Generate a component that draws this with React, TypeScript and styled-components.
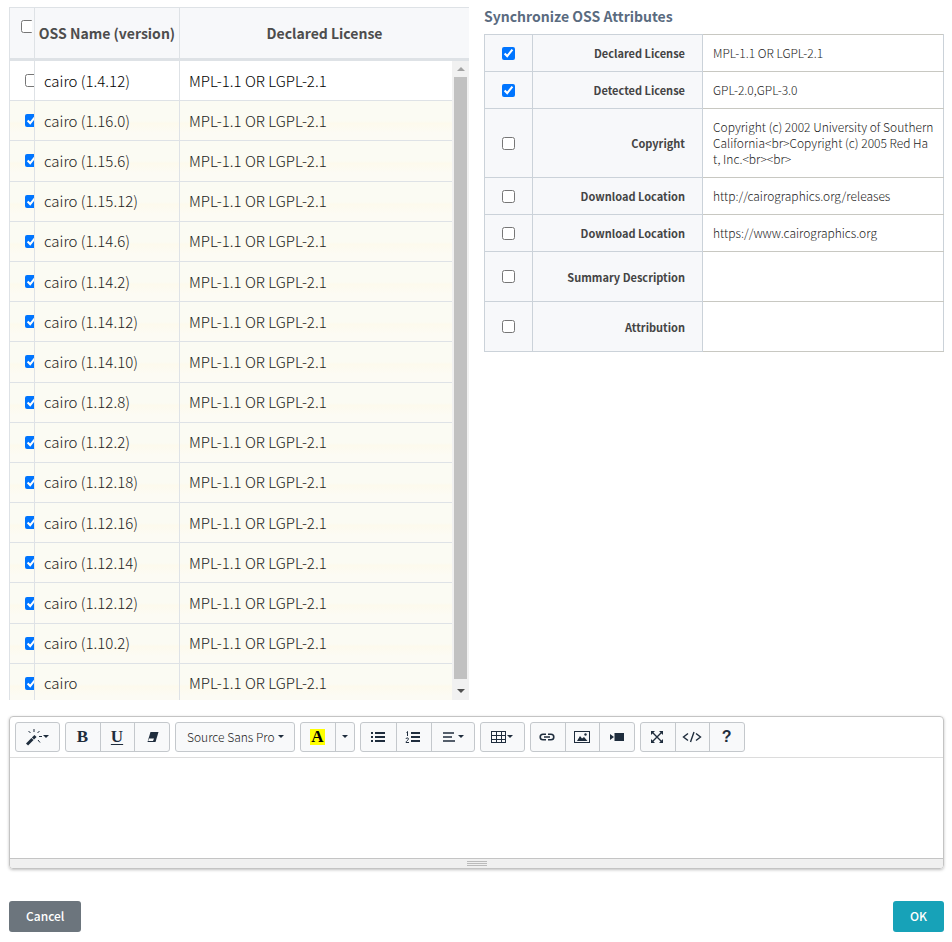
import React from "react";
import styled, { createGlobalStyle } from "styled-components";

const FONT = '"Noto Sans CJK KR", "Noto Sans CJK SC", sans-serif';

const GlobalStyle = createGlobalStyle`
  *, *::before, *::after { box-sizing: border-box; }
  body { margin: 0; background: #fff; color: #222; font-family: ${FONT}; font-size: 14px; line-height: 24px; }
  button, select, textarea, input { font-family: inherit; }
`;

const Page = styled.main`
  padding: 7px 8px 10px 9px;
`;

const Columns = styled.div`
  display: grid;
  grid-template-columns: 1fr 1fr;
  gap: 15px;
  align-items: start;
`;

const GridTable = styled.table`
  width: 100%;
  table-layout: fixed;
  border-collapse: separate;
  border-spacing: 0;
`;

const HeadTable = styled(GridTable)`
  background: #f7f8fa;
  border-top: 1px solid #dee2e6;
  border-bottom: 3px solid #dee2e6;
`;

const HeadCell = styled.th`
  height: 50px;
  padding: 0 0 1px;
  border-left: 1px solid #dee2e6;
  color: #4d4d4d;
  font-size: 14px;
  font-weight: 700;
  text-align: center;
  white-space: nowrap;
`;

const Clip = styled.div<{ $head?: boolean }>`
  display: flex;
  overflow: hidden;
  margin-right: ${(p) => (p.$head ? 2 : 0)}px;
  padding: ${(p) => (p.$head ? "0 0 13px 11px" : "0 0 0 15px")};
`;

const Check = styled.input`
  flex: none;
  width: 13px;
  height: 13px;
  margin: 0;
`;

const Scroller = styled.div`
  display: flex;
  height: 639px;
`;

const Viewport = styled.div`
  flex: 1;
  min-width: 0;
  overflow: hidden;
`;

const BodyTable = styled(GridTable)`
  height: 643px;
  font-size: 15px;
  font-weight: 300;
`;

const BodyRow = styled.tr<{ $on: boolean }>`
  background: ${(p) => (p.$on ? "linear-gradient(#fbfbf3 0 50%, #fdfaed 56%, #fcfbf4 80%, #fcfbf4)" : "#fff")};
  color: ${(p) => (p.$on ? "#222" : "#000")};
`;

const BodyCell = styled.td<{ $flush?: boolean }>`
  padding: ${(p) => (p.$flush ? "0" : "0 9px")};
  border-left: 1px solid #dee2e6;
  border-bottom: 1px solid #dee2e6;
  white-space: nowrap;
  overflow: hidden;
`;

const ScrollTrack = styled.div`
  display: flex;
  flex-direction: column;
  width: 17px;
  background: #f1f1f1;
`;

const ScrollButton = styled.button<{ $dim?: boolean }>`
  display: grid;
  place-items: center;
  height: ${(p) => (p.$dim ? 16 : 21)}px;
  padding: ${(p) => (p.$dim ? 0 : 2)}px 0 0;
  border: 0;
  background: none;
  color: ${(p) => (p.$dim ? "#a3a3a3" : "#505050")};
`;

const ScrollThumb = styled.div`
  flex: 1;
  margin: 0 2px;
  background: #c1c1c1;
`;

const Title = styled.h2`
  margin: 0;
  padding-bottom: 9px;
  color: #5a6b7f;
  font-size: 14px;
  line-height: 18px;
  font-weight: 700;
`;

const AttrTable = styled.table`
  width: 100%;
  table-layout: fixed;
  border-collapse: collapse;
  font-size: 11px;
  line-height: 16px;
`;

const AttrRow = styled.tr<{ $tall?: boolean }>`
  height: ${(p) => (p.$tall ? 50 : 37)}px;
`;

const AttrCheck = styled.td`
  padding: 0;
  border: 1px solid #cbd2d9;
  background: #f7f8fa;
  text-align: center;
  vertical-align: middle;
`;

const CheckCenter = styled.div`
  display: flex;
  justify-content: center;
`;

const AttrName = styled.th`
  padding: 0 17px 0 10px;
  border: 1px solid #cbd2d9;
  background: #f7f8fa;
  color: #444;
  text-align: right;
`;

const AttrValue = styled.td`
  padding: 10px 8px 10px 10px;
  border: 1px solid #c8c8c2;
  border-left-color: #cbd2d9;
  border-right-color: #cbd2d9;
  font-size: 12px;
  font-weight: 300;
  white-space: pre-line;
  overflow-wrap: anywhere;
`;

const Editor = styled.section`
  margin-top: 16px;
  border: 1px solid #c4c4c4;
  border-radius: 4px;
  box-shadow: 0 1px 3px rgba(0, 0, 0, 0.25);
  overflow: hidden;
`;

const Toolbar = styled.div`
  display: flex;
  flex-wrap: wrap;
  gap: 5px;
  padding: 5px;
  border-bottom: 1px solid #dcdcdc;
`;

const Group = styled.div<{ $width: number }>`
  display: flex;
  width: ${(p) => p.$width}px;
  height: 30px;
  border: 1px solid #c4c8cc;
  border-radius: 3px;
  background: #f8f9fa;
  color: #1f2d3d;
  overflow: hidden;
`;

const Tool = styled.button<{ $size?: "narrow" | "wide" }>`
  display: flex;
  align-items: center;
  justify-content: center;
  flex: ${(p) => (p.$size === "narrow" ? "0 0 19px" : p.$size === "wide" ? "0 0 43px" : "1")};
  padding: 0 1px 0 0;
  border: 0;
  background: none;
  color: inherit;

  button + & {
    border-left: 1px solid #c4c8cc;
  }
`;

const Glyph = styled.span<{ $underline?: boolean; $mark?: boolean }>`
  padding: ${(p) => (p.$mark ? "0 1px" : "0")};
  background: ${(p) => (p.$mark ? "#ff0" : "none")};
  color: ${(p) => (p.$mark ? "#000" : "inherit")};
  font-family: "Liberation Serif", serif;
  font-size: 17px;
  line-height: 16px;
  font-weight: 700;
  text-decoration: ${(p) => (p.$underline ? "underline 1px" : "none")};
  text-underline-offset: 2px;
`;

const HelpGlyph = styled.span`
  font-family: "Liberation Sans", sans-serif;
  font-size: 16px;
  line-height: 16px;
  font-weight: 700;
`;

const FontPicker = styled.label`
  display: flex;
  align-items: center;
  position: relative;
  flex: 1;

  svg {
    position: absolute;
    right: 10px;
    pointer-events: none;
  }
`;

const FontSelect = styled.select`
  appearance: none;
  width: 100%;
  height: 28px;
  padding: 0 16px 1px 11px;
  border: 0;
  background: none;
  color: #222;
  font-size: 12px;
  font-weight: 300;
`;

const Writing = styled.textarea`
  display: block;
  width: 100%;
  height: 100px;
  padding: 10px;
  border: 0;
  outline: 0;
  resize: none;
  font-size: 14px;
`;

const StatusBar = styled.div`
  display: grid;
  place-items: center;
  height: 10px;
  border-top: 1px solid #c4c4c4;
  background: #f0f0f0;
`;

const Grip = styled.span`
  width: 20px;
  height: 5px;
  border: solid #bbb;
  border-width: 1px 0;
  background: linear-gradient(transparent 1px, #bbb 1px, #bbb 2px, transparent 2px);
`;

const Footer = styled.footer`
  display: flex;
  justify-content: space-between;
  margin-top: 32px;
`;

const Action = styled.button<{ $primary?: boolean }>`
  height: 31px;
  padding: 0 17px 2px;
  border: 0;
  border-radius: 3px;
  background: ${(p) => (p.$primary ? "#17a2b8" : "#6c757d")};
  color: #fff;
  font-size: 12px;
  font-weight: 500;
`;

const Caret = () => (
  <svg width="6" height="6" viewBox="0 0 6 6" fill="currentColor" aria-hidden="true">
    <path d="M0 1h6L3 4z" />
  </svg>
);

const Icon = ({ children }: { children: React.ReactNode }) => (
  <svg width="16" height="16" viewBox="0 0 16 16" fill="none" stroke="currentColor" aria-hidden="true">
    {children}
  </svg>
);

const MagicIcon = () => (
  <svg width="17" height="18" viewBox="0 0 17 18" fill="none" stroke="currentColor" aria-hidden="true">
    <path d="M1 16.500L6.500 11" strokeWidth="3" />
    <path d="M7 10.500l2.500-2.500" strokeWidth="3" />
    <path d="M8 1v3M2.500 3l2 2M13.500 3l-2 2M13 8.500h3M12 12l2 2.500" strokeWidth="1" />
  </svg>
);
const EraserIcon = () => (
  <Icon>
    <path d="M6.500 3h8l-3 10h-8z" fill="currentColor" stroke="none" />
    <path d="M5 9.500h5l-1 2.500H4.200z" fill="#f8f9fa" stroke="none" />
  </Icon>
);
const ListIcon = () => (
  <Icon>
    <path d="M5 4h10M5 8h10M5 12h10" strokeWidth="2" />
    <path d="M1 4h2M1 8h2M1 12h2" strokeWidth="2" />
  </Icon>
);
const OrderedIcon = () => (
  <Icon>
    <path d="M6 4h9M6 8h9M6 12h9" strokeWidth="2" />
    <path d="M1.500 3.500L2.500 2.500V7M1 10c0-1.500 2.500-1.500 2.500 0C3.500 11 1 12 1 13.500h3" />
  </Icon>
);
const AlignIcon = () => (
  <Icon>
    <path d="M1 4h11M1 8h9M1 12h12" strokeWidth="1.600" />
  </Icon>
);
const GridIcon = () => (
  <Icon>
    <rect x="0.500" y="2.500" width="14" height="11" />
    <path d="M0.500 6.500h14M0.500 10.500h14M5.500 2.500v11M10.500 2.500v11" />
  </Icon>
);
const LinkIcon = () => (
  <Icon>
    <path d="M7 5.200H4a2.800 2.800 0 0 0 0 5.600h3M9 5.200h3a2.800 2.800 0 0 1 0 5.600H9M5 8h6" strokeWidth="1.600" />
  </Icon>
);
const PictureIcon = () => (
  <Icon>
    <rect x="0.500" y="2.500" width="15" height="11" />
    <path d="M3 12l3-5 2 2.500L10 8l3.500 4z" fill="currentColor" stroke="none" />
    <circle cx="11.500" cy="5.500" r="1.200" fill="currentColor" stroke="none" />
  </Icon>
);
const VideoIcon = () => (
  <Icon>
    <path d="M5.500 4H15v8H5.500zM1 5l4 3-4 3z" fill="currentColor" stroke="none" />
  </Icon>
);
const ExpandIcon = () => (
  <Icon>
    <path d="M3.500 3.500l9 9M12.500 3.500l-9 9" strokeWidth="1.400" />
    <path d="M2 2h4L2 6zM14 2v4l-4-4zM2 14v-4l4 4zM14 14h-4l4-4z" fill="currentColor" stroke="none" />
  </Icon>
);
const CodeIcon = () => (
  <svg width="20" height="16" viewBox="0 0 20 16" fill="none" stroke="currentColor" strokeWidth="1.400" aria-hidden="true">
    <path d="M6 4.500L1.500 8 6 11.500M14 4.500L18.500 8 14 11.500M12 3L8.500 13" />
  </svg>
);

const versions = [
  "1.4.12", "1.16.0", "1.15.6", "1.15.12", "1.14.6", "1.14.2", "1.14.12", "1.14.10",
  "1.12.8", "1.12.2", "1.12.18", "1.12.16", "1.12.14", "1.12.12", "1.10.2", "",
];

const attributes = [
  { name: "Declared License", value: "MPL-1.1 OR LGPL-2.1", on: true },
  { name: "Detected License", value: "GPL-2.0,GPL-3.0", on: true },
  {
    name: "Copyright",
    value: "Copyright (c) 2002 University of Southern\nCalifornia<br>Copyright (c) 2005 Red Ha\nt, Inc.<br><br>",
  },
  { name: "Download Location", value: "http://cairographics.org/releases" },
  { name: "Download Location", value: "https://www.cairographics.org" },
  { name: "Summary Description", value: "", tall: true },
  { name: "Attribution", value: "", tall: true },
];

export default function App() {
  return (
    <>
      <GlobalStyle />
      <Page>
        <Columns>
          <section>
            <HeadTable>
              <colgroup>
                <col width="25" />
                <col width="145" />
                <col />
              </colgroup>
              <thead>
                <tr>
                  <HeadCell>
                    <Clip $head>
                      <Check type="checkbox" aria-label="Select all" />
                    </Clip>
                  </HeadCell>
                  <HeadCell>OSS Name (version)</HeadCell>
                  <HeadCell>Declared License</HeadCell>
                </tr>
              </thead>
            </HeadTable>
            <Scroller>
              <Viewport>
                <BodyTable>
                  <colgroup>
                    <col width="25" />
                    <col width="145" />
                    <col />
                  </colgroup>
                  <tbody>
                    {versions.map((v, i) => {
                      const name = v ? `cairo (${v})` : "cairo";
                      return (
                        <BodyRow key={name} $on={i > 0}>
                          <BodyCell $flush>
                            <Clip>
                              <Check type="checkbox" defaultChecked={i > 0} aria-label={name} />
                            </Clip>
                          </BodyCell>
                          <BodyCell>{name}</BodyCell>
                          <BodyCell>MPL-1.1 OR LGPL-2.1</BodyCell>
                        </BodyRow>
                      );
                    })}
                  </tbody>
                </BodyTable>
              </Viewport>
              <ScrollTrack>
                <ScrollButton type="button" $dim aria-label="Scroll up">
                  <svg width="8" height="4" viewBox="0 0 8 4" fill="currentColor"><path d="M0 4h8L4 0z" /></svg>
                </ScrollButton>
                <ScrollThumb />
                <ScrollButton type="button" aria-label="Scroll down">
                  <svg width="8" height="4" viewBox="0 0 8 4" fill="currentColor"><path d="M0 0h8L4 4z" /></svg>
                </ScrollButton>
              </ScrollTrack>
            </Scroller>
          </section>

          <section>
            <Title>Synchronize OSS Attributes</Title>
            <AttrTable>
              <colgroup>
                <col width="48" />
                <col width="170" />
                <col />
              </colgroup>
              <tbody>
                {attributes.map((a, i) => (
                  <AttrRow key={i} $tall={a.tall}>
                    <AttrCheck>
                      <CheckCenter>
                        <Check type="checkbox" id={`attr-${i}`} defaultChecked={a.on} />
                      </CheckCenter>
                    </AttrCheck>
                    <AttrName scope="row">
                      <label htmlFor={`attr-${i}`}>{a.name}</label>
                    </AttrName>
                    <AttrValue>{a.value}</AttrValue>
                  </AttrRow>
                ))}
              </tbody>
            </AttrTable>
          </section>
        </Columns>

        <Editor>
          <Toolbar>
            <Group $width={45}>
              <Tool type="button" $size="wide" aria-label="Style"><MagicIcon /><Caret /></Tool>
            </Group>
            <Group $width={105}>
              <Tool type="button" aria-label="Bold"><Glyph>B</Glyph></Tool>
              <Tool type="button" aria-label="Underline"><Glyph $underline>U</Glyph></Tool>
              <Tool type="button" aria-label="Remove font style"><EraserIcon /></Tool>
            </Group>
            <Group $width={120}>
              <FontPicker>
                <FontSelect aria-label="Font family">
                  <option>Source Sans Pro</option>
                </FontSelect>
                <Caret />
              </FontPicker>
            </Group>
            <Group $width={55}>
              <Tool type="button" aria-label="Recent color"><Glyph $mark>A</Glyph></Tool>
              <Tool type="button" $size="narrow" aria-label="More colors"><Caret /></Tool>
            </Group>
            <Group $width={115}>
              <Tool type="button" aria-label="Unordered list"><ListIcon /></Tool>
              <Tool type="button" aria-label="Ordered list"><OrderedIcon /></Tool>
              <Tool type="button" $size="wide" aria-label="Paragraph"><AlignIcon /><Caret /></Tool>
            </Group>
            <Group $width={45}>
              <Tool type="button" $size="wide" aria-label="Table"><GridIcon /><Caret /></Tool>
            </Group>
            <Group $width={105}>
              <Tool type="button" aria-label="Link"><LinkIcon /></Tool>
              <Tool type="button" aria-label="Picture"><PictureIcon /></Tool>
              <Tool type="button" aria-label="Video"><VideoIcon /></Tool>
            </Group>
            <Group $width={105}>
              <Tool type="button" aria-label="Full screen"><ExpandIcon /></Tool>
              <Tool type="button" aria-label="Code view"><CodeIcon /></Tool>
              <Tool type="button" aria-label="Help"><HelpGlyph>?</HelpGlyph></Tool>
            </Group>
          </Toolbar>
          <Writing aria-label="Comment" />
          <StatusBar><Grip /></StatusBar>
        </Editor>

        <Footer>
          <Action type="button">Cancel</Action>
          <Action type="button" $primary>OK</Action>
        </Footer>
      </Page>
    </>
  );
}
